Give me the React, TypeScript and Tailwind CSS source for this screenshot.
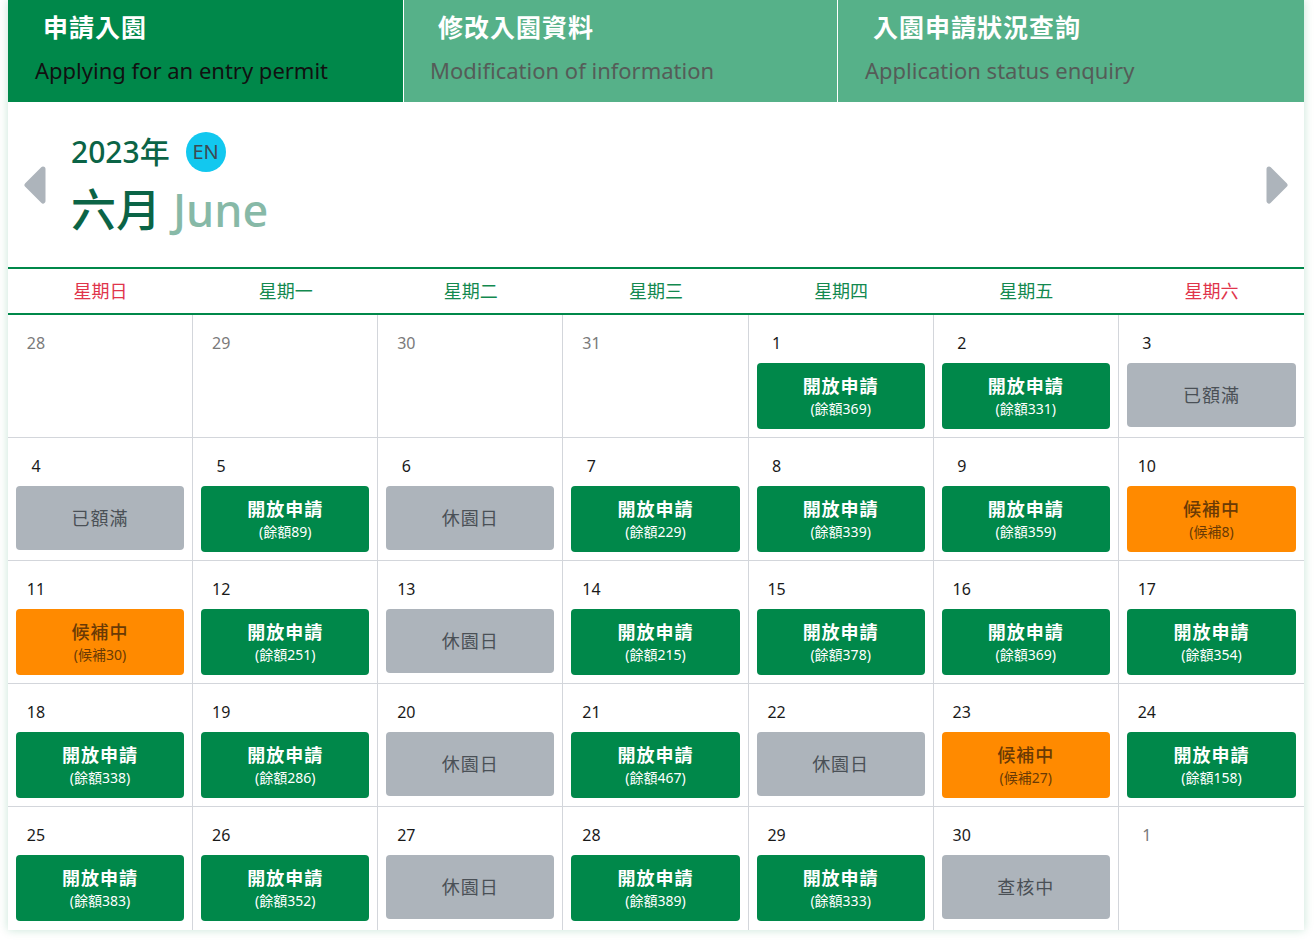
import React from "react"

type Status = "open" | "full" | "closed" | "wait" | "review" | "none"

type Day = {
  d: number
  other?: boolean
  s: Status
  n?: number
}

const weeks: Day[][] = [
  [
    { d: 28, other: true, s: "none" },
    { d: 29, other: true, s: "none" },
    { d: 30, other: true, s: "none" },
    { d: 31, other: true, s: "none" },
    { d: 1, s: "open", n: 369 },
    { d: 2, s: "open", n: 331 },
    { d: 3, s: "full" },
  ],
  [
    { d: 4, s: "full" },
    { d: 5, s: "open", n: 89 },
    { d: 6, s: "closed" },
    { d: 7, s: "open", n: 229 },
    { d: 8, s: "open", n: 339 },
    { d: 9, s: "open", n: 359 },
    { d: 10, s: "wait", n: 8 },
  ],
  [
    { d: 11, s: "wait", n: 30 },
    { d: 12, s: "open", n: 251 },
    { d: 13, s: "closed" },
    { d: 14, s: "open", n: 215 },
    { d: 15, s: "open", n: 378 },
    { d: 16, s: "open", n: 369 },
    { d: 17, s: "open", n: 354 },
  ],
  [
    { d: 18, s: "open", n: 338 },
    { d: 19, s: "open", n: 286 },
    { d: 20, s: "closed" },
    { d: 21, s: "open", n: 467 },
    { d: 22, s: "closed" },
    { d: 23, s: "wait", n: 27 },
    { d: 24, s: "open", n: 158 },
  ],
  [
    { d: 25, s: "open", n: 383 },
    { d: 26, s: "open", n: 352 },
    { d: 27, s: "closed" },
    { d: 28, s: "open", n: 389 },
    { d: 29, s: "open", n: 333 },
    { d: 30, s: "review" },
    { d: 1, other: true, s: "none" },
  ],
]

const weekdays = ["星期日", "星期一", "星期二", "星期三", "星期四", "星期五", "星期六"]

const StatusButton = ({ day }: { day: Day }) => {
  if (day.s === "none") return null
  if (day.s === "open") {
    return (
      <button className="w-full h-[66px] rounded bg-[#00884a] text-white flex flex-col items-center justify-center cursor-pointer">
        <span className="text-[18px] leading-[24px] font-bold tracking-[1px]">開放申請</span>
        <span className="text-[14px] leading-[20px] mt-[1px]">(餘額{day.n})</span>
      </button>
    )
  }
  if (day.s === "wait") {
    return (
      <button className="w-full h-[66px] rounded bg-[#ff8a00] text-[#6a3a05] flex flex-col items-center justify-center cursor-pointer">
        <span className="text-[18px] leading-[24px] font-medium tracking-[1px]">候補中</span>
        <span className="text-[14px] leading-[20px] mt-[1px]">(候補{day.n})</span>
      </button>
    )
  }
  const label = day.s === "full" ? "已額滿" : day.s === "closed" ? "休園日" : "查核中"
  return (
    <div className="w-full h-[64px] rounded bg-[#adb4bb] text-[#4a5056] flex items-center justify-center">
      <span className="text-[18px] leading-[24px] tracking-[1px]">{label}</span>
    </div>
  )
}

const Arrow = ({ dir }: { dir: "left" | "right" }) => (
  <button className="w-[22px] h-[38px] cursor-pointer">
    <svg width="22" height="38" viewBox="0 0 22 38">
      {dir === "left" ? (
        <path d="M19 3 L3 19 L19 35 Z" fill="#adb4bb" stroke="#adb4bb" strokeWidth="5" strokeLinejoin="round" />
      ) : (
        <path d="M3 3 L19 19 L3 35 Z" fill="#adb4bb" stroke="#adb4bb" strokeWidth="5" strokeLinejoin="round" />
      )}
    </svg>
  </button>
)

export default function App() {
  return (
    <div className="min-h-[941px] bg-white pl-2 pr-[11px] font-['Noto_Sans','Noto_Sans_CJK_TC',sans-serif]">
      <div className="bg-white shadow-[0_0_9px_rgba(0,136,74,0.22)]">
        {/* tabs */}
        <div className="flex h-[102px]">
          <div className="w-[395px] bg-[#00884a] flex flex-col pl-[27px]">
            <div className="pl-2 pt-[9px] text-[25px] leading-[36px] font-bold text-white tracking-[1px]">申請入園</div>
            <div className="pt-[10px] text-[22px] leading-[30px] text-[#111]">Applying for an entry permit</div>
          </div>
          <div className="w-[434px] border-l border-white bg-[#56b189] flex flex-col pl-[26px]">
            <div className="pl-2 pt-[9px] text-[25px] leading-[36px] font-bold text-white tracking-[1px]">修改入園資料</div>
            <div className="pt-[10px] text-[22px] leading-[30px] text-[#555c58]">Modification of information</div>
          </div>
          <div className="flex-1 border-l border-white bg-[#56b189] flex flex-col pl-[27px]">
            <div className="pl-2 pt-[9px] text-[25px] leading-[36px] font-bold text-white tracking-[1px]">入園申請狀況查詢</div>
            <div className="pt-[10px] text-[22px] leading-[30px] text-[#555c58]">Application status enquiry</div>
          </div>
        </div>

        {/* month header */}
        <div className="h-[165px] flex items-center px-4">
          <Arrow dir="left" />
          <div className="flex-1 pl-[25px]">
            <div className="flex items-center">
              <span className="text-[30px] leading-[40px] font-medium text-[#0b6446]">2023年</span>
              <span className="ml-[16px] w-[40px] h-[40px] rounded-full bg-[#12c8ef] text-[#3d4a52] text-[20px] flex items-center justify-center">EN</span>
            </div>
            <div className="mt-[10px] text-[45px] leading-[56px] font-medium">
              <span className="text-[#0b6446]">六月</span>
              <span className="text-[#87b9a7] ml-[12px]">June</span>
            </div>
          </div>
          <Arrow dir="right" />
        </div>

        {/* weekday row */}
        <div className="grid grid-cols-7 border-t-2 border-b-2 border-[#00884a] h-[48px]">
          {weekdays.map((w, i) => (
            <div
              key={w}
              className={`flex items-center justify-center text-[18px] ${
                i === 0 || i === 6 ? "text-[#e0354b]" : "text-[#13894f]"
              }`}
            >
              {w}
            </div>
          ))}
        </div>

        {/* calendar grid */}
        <div>
          {weeks.map((week, wi) => (
            <div
              key={wi}
              className={`grid grid-cols-7 h-[123px] ${wi < weeks.length - 1 ? "border-b border-[#d3d6db]" : ""}`}
            >
              {week.map((day, di) => (
                <div
                  key={di}
                  className={`px-2 pt-4 ${di < 6 ? "border-r border-[#d3d6db]" : ""}`}
                >
                  <div
                    className={`ml-[5px] w-[30px] text-center text-[16px] leading-6 ${day.other ? "text-[#7a7a7a]" : "text-[#1a1a1a]"}`}
                  >
                    {day.d}
                  </div>
                  <div className="mt-2">
                    <StatusButton day={day} />
                  </div>
                </div>
              ))}
            </div>
          ))}
        </div>
      </div>
    </div>
  )
}
